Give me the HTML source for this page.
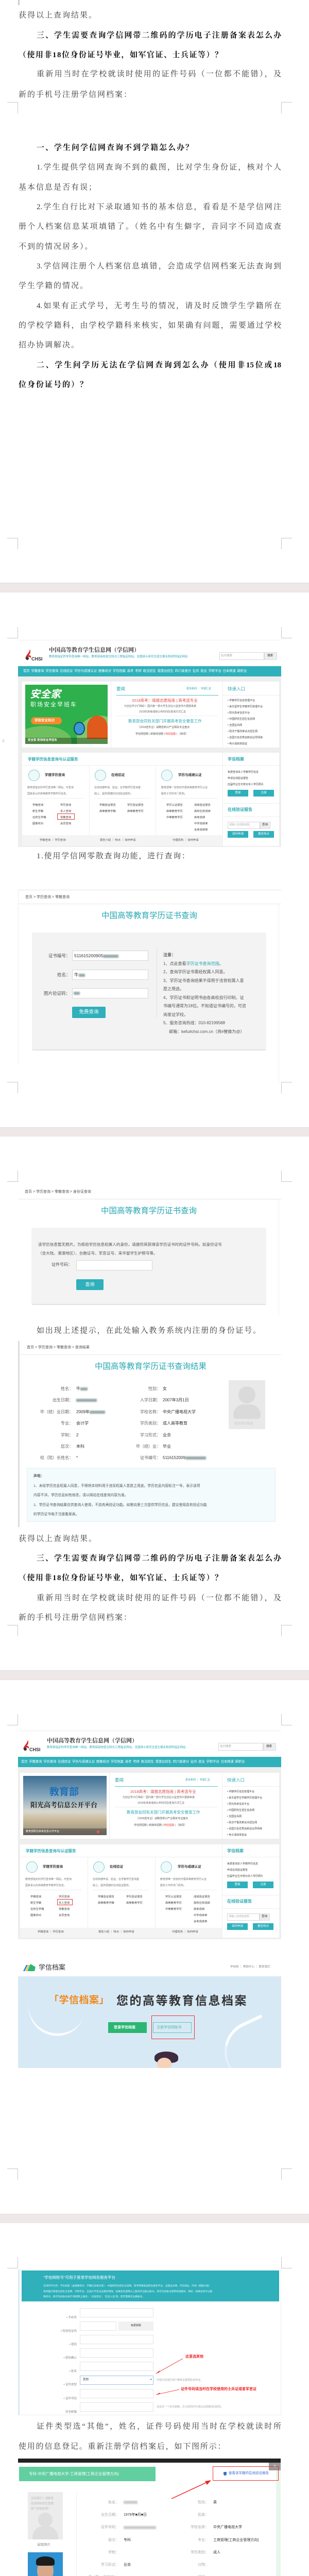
<!DOCTYPE html>
<html><head><meta charset="utf-8">
<style>
*{margin:0;padding:0;box-sizing:border-box}
html{width:600px;height:5150px;overflow:hidden}
body{width:600px;height:5150px;background:#fff;position:relative;overflow:hidden}
.a{position:absolute}
.t{position:absolute;font-family:"Liberation Serif","Noto Serif CJK SC",serif;font-size:15px;line-height:20px;letter-spacing:2px;color:#3c3c3c;white-space:nowrap}
.b{font-weight:bold;color:#111}
.j{text-align:justify;text-align-last:justify;letter-spacing:0;white-space:normal;height:20px;overflow:hidden}
.x{position:absolute;font-family:"Liberation Sans","Noto Sans CJK SC",sans-serif;white-space:nowrap;line-height:1}
.band{position:absolute;left:0;width:600px;background:#eee8e8;border-top:1px solid #e2dcdc;border-bottom:1px solid #e8e4e4}
.cd{position:absolute;width:21px;height:22px;border-color:#c8c8c8;border-style:solid;border-width:0}
.bl{filter:blur(1.2px);background:#9aa;display:inline-block;height:6px;vertical-align:middle}
.tl{color:#2aa8b4}
.btn{position:absolute;background:#2fb0bb;color:#fff;font-family:"Liberation Sans","Noto Sans CJK SC",sans-serif;text-align:center;white-space:nowrap}
.inp{position:absolute;background:#fff;border:1px solid #d6d6d6}
.chsi{position:absolute;left:35px;width:511px;height:401px;background:#fff;border-top:1px solid #eee}
.w{position:absolute;background:#fff}
</style></head><body>

<div class="a" style="left:35px;top:0;width:3px;height:10px;background:#ccc"></div>

<div class="t" style="left:36px;top:20px">获得以上查询结果。</div>
<div class="t b j" style="left:71px;top:59px;width:475px">三、学生需要查询学信网带二维码的学历电子注册备案表怎么办</div>
<div class="t b" style="left:36px;top:97px;letter-spacing:1.5px">（使用非18位身份证号毕业，如军官证、士兵证等）？</div>
<div class="t j" style="left:71px;top:134px;width:475px">重新用当时在学校就读时使用的证件号码（一位都不能错），及</div>
<div class="t" style="left:36px;top:174px">新的手机号注册学信网档案：</div>

<div class="cd" style="left:14px;top:198px;border-top-width:1px;border-right-width:1px"></div>
<div class="cd" style="left:546px;top:198px;border-top-width:1px;border-left-width:1px"></div>

<div class="t b" style="left:71px;top:277px">一、学生问学信网查询不到学籍怎么办？</div>
<div class="t j" style="left:71px;top:315px;width:475px">1.学生提供学信网查询不到的截图，比对学生身份证，核对个人</div>
<div class="t" style="left:36px;top:354px">基本信息是否有误；</div>
<div class="t j" style="left:71px;top:392px;width:475px">2.学生自行比对下录取通知书的基本信息，看看是不是学信网注</div>
<div class="t j" style="left:36px;top:430px;width:510px">册个人档案信息某项填错了。（姓名中有生僻字，音同字不同造成查</div>
<div class="t" style="left:36px;top:469px">不到的情况居多）。</div>
<div class="t j" style="left:71px;top:507px;width:475px">3.学信网注册个人档案信息填错，会造成学信网档案无法查询到</div>
<div class="t" style="left:36px;top:545px">学生学籍的情况。</div>
<div class="t j" style="left:71px;top:584px;width:475px">4.如果有正式学号，无考生号的情况，请及时反馈学生学籍所在</div>
<div class="t j" style="left:36px;top:622px;width:510px">的学校学籍科，由学校学籍科来核实，如果确有问题，需要通过学校</div>
<div class="t" style="left:36px;top:660px">招办协调解决。</div>
<div class="t b j" style="left:71px;top:699px;width:475px">二、学生问学历无法在学信网查询到怎么办（使用非15位或18</div>
<div class="t b" style="left:36px;top:737px">位身份证号的）？</div>

<div class="cd" style="left:14px;top:1044px;border-top-width:1px;border-right-width:1px"></div>
<div class="cd" style="left:546px;top:1044px;border-top-width:1px;border-left-width:1px"></div>
<div class="band" style="top:1131px;height:19px"></div>
<div class="cd" style="left:14px;top:1217px;border-bottom-width:1px;border-right-width:1px"></div>
<div class="cd" style="left:546px;top:1217px;border-bottom-width:1px;border-left-width:1px"></div>
<div class="x" style="left:4px;top:1436px;font-size:7px;color:#999">⠿</div>

<div class="chsi" style="top:1242px">
 <svg class="a" style="left:10px;top:13px" width="44" height="28" viewBox="0 0 44 28"><path d="M4 22 C6 14 12 12 13 4 C15 9 14 13 10 16 C14 15 16 18 15 21 C12 18 8 18 4 22Z" fill="#d9262a"/><circle cx="8" cy="22" r="3" fill="#333"/><text x="16" y="26" font-family="Liberation Sans" font-size="9" font-weight="bold" fill="#333">CHSI</text></svg>
 <div class="x" style="left:60px;top:14px;font-size:11px;font-weight:bold;color:#333;font-family:'Liberation Serif','Noto Serif CJK SC',serif">中国高等教育学生信息网（学信网）</div>
 <div class="x tl" style="left:60px;top:30px;font-size:5.5px">教育部指定的学历查询唯一网站、教育部高校招生阳光工程指定网站、全国硕士研究生招生报名和调剂指定网站</div>
 <div class="inp" style="left:391px;top:23px;width:87px;height:15px"></div>
 <div class="x" style="left:394px;top:28px;font-size:5.5px;color:#aaa">站内搜索</div>
 <div class="a" style="left:478px;top:23px;width:25px;height:15px;background:#eee;border:1px solid #ddd"></div>
 <div class="x" style="left:484px;top:28px;font-size:5.5px;color:#333">搜索</div>
 <div class="a" style="left:0;top:50px;width:511px;height:20px;background:#2fb1bb"></div>
 <div class="x" style="left:10px;top:57px;font-size:6.3px;color:#fff;word-spacing:1px">首页 学籍查询 学历查询 在线验证 学历与成绩认证 图像校对 学信档案 高考 考研 政法招生 港澳台招生 四六级查分 征兵 就业 学职平台 日本频道 新职业</div>
 <div class="a" style="left:0;top:70px;width:511px;height:331px;background:#eeeeee"></div>
 <div class="w" style="left:8px;top:80px;width:172px;height:128px"></div>
 <div class="a" style="left:14px;top:86px;width:160px;height:115px;background:#2eb04c;overflow:hidden">
  <div class="a" style="left:100px;top:60px;width:90px;height:90px;border-radius:50%;background:#7ec86b"></div>
  <div class="a" style="left:-20px;top:80px;width:110px;height:60px;border-radius:50%;background:#6fbf5e"></div>
  <div class="x" style="left:9px;top:9px;font-size:20px;font-weight:bold;font-style:italic;color:#fff">安全家</div>
  <div class="x" style="left:10px;top:34px;font-size:11px;color:#fff;letter-spacing:2px">职场安全早班车</div>
  <div class="a" style="left:11px;top:63px;width:60px;height:14px;border-radius:7px;background:#f68a2a"></div>
  <div class="x" style="left:18px;top:67px;font-size:6.5px;color:#fff;font-weight:bold">获取安全知识</div>
  <div class="a" style="left:120px;top:60px;width:40px;height:45px;border-radius:50% 50% 0 0;background:#e05a1c"></div>
  <div class="a" style="left:94px;top:72px;width:22px;height:26px;border-radius:50%;background:#3a9ad8;border:2px solid #246"></div>
  <div class="a" style="left:0;top:103px;width:160px;height:12px;background:rgba(0,0,0,.3)"></div>
  <div class="x" style="left:5px;top:106px;font-size:5.5px;color:#fff;font-weight:bold">安全家·职场安全早班车</div>
 </div>
 <div class="w" style="left:181px;top:80px;width:216px;height:128px"></div>
 <div class="x tl" style="left:191px;top:90px;font-size:8.5px">要闻</div>
 <div class="x tl" style="left:327px;top:92px;font-size:5px">更多新闻 ｜ 专题汇总</div>
 <div class="a" style="left:191px;top:106px;width:198px;height:1px;background:#5bc0c8"></div>
 <div class="x" style="left:221px;top:113px;font-size:7.5px;color:#e24b4b">2018高考：填报志愿指南 | 高考选专业</div>
 <div class="x" style="left:206px;top:126px;font-size:5px;color:#666">为创业学子们喝彩！国内第一部大学生创业公益宣传片震撼来袭</div>
 <div class="x" style="left:235px;top:137px;font-size:5px;color:#666">2018年高考成绩公布时间及查询方式汇总</div>
 <div class="a" style="left:191px;top:146px;width:198px;height:1px;background:#eee"></div>
 <div class="x tl" style="left:214px;top:153px;font-size:7.5px">教育部会同有关部门开展高考安全督查工作</div>
 <div class="x" style="left:232px;top:167px;font-size:5px;color:#555">［2018选专业］战略性新兴产业相关专业盘点</div>
 <div class="x" style="left:228px;top:180px;font-size:5px;color:#555">学信网招聘 | 新媒体招聘 | <span style="color:#e44">特别提醒</span> | ［新闻］</div>
 <div class="w" style="left:398px;top:80px;width:109px;height:128px"></div>
 <div class="x tl" style="left:407px;top:90px;font-size:8.5px">快速入口</div>
 <div class="a" style="left:398px;top:106px;width:109px;height:1px;background:#eee"></div>
 <div class="x" style="left:407px;top:111px;font-size:5px;color:#444;line-height:12px">• 学籍学历信息管理平台<br>• 来华留学生学籍学历管理平台<br>• 阳光高考信息平台<br>• 中国研究生招生信息网<br>• 全国征兵网<br>• 政法干警改革试点招生网<br>• 全国万名优秀创新创业导师库<br>• 电子成绩单验证</div>
 <div class="w" style="left:8px;top:218px;width:389px;height:181px"></div>
 <div class="x tl" style="left:19px;top:227px;font-size:7.5px;font-weight:bold">学籍学历信息查询与认证服务</div>
 <div class="a" style="left:8px;top:242px;width:389px;height:1px;background:#eee"></div>
 <div class="a" style="left:138px;top:242px;width:1px;height:157px;background:#eee"></div>
 <div class="a" style="left:267px;top:242px;width:1px;height:157px;background:#eee"></div>
 <div class="a" style="left:8px;top:378px;width:389px;height:21px;background:#f4f4f4"></div>
 <div class="a" style="left:20px;top:251px;width:22px;height:22px;border-radius:50%;border:1px solid #7fcbd2;background:#eef9fa"></div>
 <div class="a" style="left:149px;top:251px;width:22px;height:22px;border-radius:50%;border:1px solid #7fcbd2;background:#eef9fa"></div>
 <div class="a" style="left:278px;top:251px;width:22px;height:22px;border-radius:50%;border:1px solid #7fcbd2;background:#eef9fa"></div>
 <div class="x" style="left:52px;top:259px;font-size:6.5px;font-weight:bold;color:#333">学籍学历查询</div>
 <div class="x" style="left:181px;top:259px;font-size:6.5px;font-weight:bold;color:#333">在线验证</div>
 <div class="x" style="left:311px;top:259px;font-size:6.5px;font-weight:bold;color:#333">学历与成绩认证</div>
 <div class="x" style="left:18px;top:280px;font-size:5px;color:#777;line-height:12px">教育部指定的学历查询唯一网站，可查询<br>国家承认的高等教育学籍学历信息。</div>
 <div class="x" style="left:148px;top:280px;font-size:5px;color:#777;line-height:12px">在线快捷申请、验证。在学籍学历查询基<br>础上，提供便捷的在线验证服务。</div>
 <div class="x" style="left:278px;top:280px;font-size:5px;color:#777;line-height:12px">教育部唯一授权的开展高等教育学历认证<br>服务工作的专门机构。</div>
 <div class="a" style="left:18px;top:306px;width:110px;height:1px;background:#eee"></div>
 <div class="a" style="left:148px;top:306px;width:110px;height:1px;background:#eee"></div>
 <div class="a" style="left:278px;top:306px;width:110px;height:1px;background:#eee"></div>
 <div class="x" style="left:28px;top:314px;font-size:5.3px;color:#444;line-height:12px">学籍查询<br>新生学籍<br>在校生学籍<br>图像校对</div>
 <div class="x" style="left:82px;top:314px;font-size:5.3px;color:#444;line-height:12px">学历查询<br>本人查询<br>零散查询<br>会员查询</div>
 <div class="a" style="left:76px;top:336px;width:34px;height:12px;border:1px solid #e33"></div>
 <div class="x" style="left:158px;top:314px;font-size:5.3px;color:#444;line-height:12px">学籍验证报告<br>高等教育学籍</div>
 <div class="x" style="left:212px;top:314px;font-size:5.3px;color:#444;line-height:12px">学历验证报告<br>高等教育学历</div>
 <div class="x" style="left:288px;top:314px;font-size:5.3px;color:#444;line-height:12px">学历认证报告<br>高等教育学历<br>中等教育学历</div>
 <div class="x" style="left:342px;top:314px;font-size:5.3px;color:#444;line-height:12px">成绩验证报告<br>高校在校成绩<br>高考成绩<br>中学成绩单<br>会考成绩单</div>
 <div class="x" style="left:42px;top:386px;font-size:5.3px;color:#555">学籍查询 ｜ 学历查询</div>
 <div class="x" style="left:159px;top:386px;font-size:5.3px;color:#555">报告介绍 ｜ 特点 ｜ 如何申请</div>
 <div class="x" style="left:300px;top:386px;font-size:5.3px;color:#555">代理机构 ｜ 如何申请</div>
 <div class="w" style="left:398px;top:218px;width:109px;height:181px"></div>
 <div class="x tl" style="left:407px;top:227px;font-size:8px;font-weight:bold">学信档案</div>
 <div class="a" style="left:398px;top:242px;width:109px;height:1px;background:#eee"></div>
 <div class="x" style="left:407px;top:250px;font-size:5px;color:#444;line-height:12px">免费查询本人学籍学历信息<br>申请在线验证报告<br>应届毕业生可校对本人学历照片</div>
 <div class="btn" style="left:407px;top:290px;width:40px;height:13px;font-size:5.5px;line-height:13px">登录</div>
 <div class="btn" style="left:457px;top:290px;width:40px;height:13px;font-size:5.5px;line-height:13px">注册</div>
 <div class="a" style="left:398px;top:316px;width:109px;height:1px;background:#eee"></div>
 <div class="x tl" style="left:407px;top:325px;font-size:8px;font-weight:bold">在线验证报告</div>
 <div class="a" style="left:398px;top:342px;width:109px;height:1px;background:#eee"></div>
 <div class="inp" style="left:407px;top:352px;width:63px;height:14px"></div>
 <div class="x" style="left:410px;top:356px;font-size:5px;color:#aaa">请输入在线验证码</div>
 <div class="a" style="left:470px;top:352px;width:20px;height:14px;background:#eee;border:1px solid #ddd"></div>
 <div class="x" style="left:474px;top:356px;font-size:5.5px;color:#333">查询</div>
 <div class="btn" style="left:407px;top:370px;width:40px;height:13px;font-size:5.5px;line-height:13px">如何申请</div>
 <div class="btn" style="left:457px;top:370px;width:40px;height:13px;font-size:5.5px;line-height:13px">报告特点</div>
</div>

<div class="t" style="left:71px;top:1652px;letter-spacing:1.7px">1.使用学信网零散查询功能，进行查询：</div>

<div class="a" style="left:35px;top:1727px;width:511px;height:340px;border-top:1px solid #e4e4e4;border-left:1px solid #eee"></div>
<div class="a" style="left:541px;top:1754px;width:1px;height:350px;background:#eee"></div>
<div class="x" style="left:49px;top:1738px;font-size:7px;color:#555">首页 &gt; 学历查询 &gt; 零散查询</div>
<div class="a" style="left:35px;top:1754px;width:511px;height:1px;background:#e8e8e8"></div>
<div class="x tl" style="left:197px;top:1770px;font-size:15.5px">中国高等教育学历证书查询</div>
<div class="a" style="left:62px;top:1810px;width:455px;height:229px;background:#f3f3f3;border-bottom:2px solid #e2e2e2;border-radius:3px"></div>
<div class="x" style="left:94px;top:1851px;font-size:8.5px;color:#555">证书编号：</div>
<div class="x" style="left:111px;top:1888px;font-size:8.5px;color:#555">姓名：</div>
<div class="x" style="left:85px;top:1924px;font-size:8.5px;color:#555">图片验证码：</div>
<div class="inp" style="left:140px;top:1845px;width:148px;height:20px"></div>
<div class="inp" style="left:140px;top:1882px;width:148px;height:20px"></div>
<div class="inp" style="left:140px;top:1918px;width:148px;height:20px"></div>
<div class="x" style="left:144px;top:1851px;font-size:8.5px;color:#333">511615200905<span class="bl" style="width:30px"></span></div>
<div class="x" style="left:144px;top:1888px;font-size:8.5px;color:#333">牛<span class="bl" style="width:12px"></span></div>
<div class="x" style="left:143px;top:1924px;font-size:8px"><span class="bl" style="width:12px"></span></div>
<div class="btn" style="left:140px;top:1954px;width:65px;height:22px;font-size:9.5px;line-height:22px;border-radius:2px">免费查询</div>
<div class="a" style="left:304px;top:1840px;width:1px;height:135px;background:#e0e0e0"></div>
<div class="x" style="left:317px;top:1846px;font-size:8px;color:#555;line-height:16.5px">
<b>注意：</b><br>1、点此查看<span class="tl">学历证书查询范围</span>。<br>2、查询学历证书需经权属人同意。<br>3、学历证书查询结果不得用于违背权属人意<br>愿之用途。<br>4、学历证书和证明书由各高校自行印制，证<br>书编号通常为18位。不知道证书编号的，可咨<br>询发证学校。<br>5、服务咨询热线：010-82199588<br>&nbsp;&nbsp;&nbsp;&nbsp;&nbsp;邮箱：kefu#chsi.com.cn（将#替换为@）</div>

<div class="cd" style="left:14px;top:2100px;border-top-width:1px;border-right-width:1px"></div>
<div class="cd" style="left:546px;top:2100px;border-top-width:1px;border-left-width:1px"></div>
<div class="band" style="top:2188px;height:18px"></div>
<div class="cd" style="left:14px;top:2272px;border-bottom-width:1px;border-right-width:1px"></div>
<div class="cd" style="left:546px;top:2272px;border-bottom-width:1px;border-left-width:1px"></div>

<div class="x" style="left:48px;top:2310px;font-size:7px;color:#555">首页 &gt; 学历查询 &gt; 零散查询 &gt; 身份证查询</div>
<div class="a" style="left:35px;top:2327px;width:511px;height:1px;background:#e8e8e8"></div>
<div class="a" style="left:541px;top:2327px;width:1px;height:226px;background:#eee"></div>
<div class="x tl" style="left:196px;top:2343px;font-size:15.5px">中国高等教育学历证书查询</div>
<div class="a" style="left:61px;top:2383px;width:456px;height:150px;background:#f3f3f3;border-bottom:2px solid #e2e2e2;border-radius:3px"></div>
<div class="x" style="left:74px;top:2407px;font-size:7.6px;color:#555;line-height:17px">该学历信息暂无照片。为核验学历信息权属人的身份，请提供其获得该学历证书时的证件号码。如身份证号<br>（含大陆、港澳地区）、台胞证号、军官证号、来华留学生护照号等。</div>
<div class="x" style="left:100px;top:2451px;font-size:8px;color:#555">证件号码：</div>
<div class="inp" style="left:148px;top:2446px;width:148px;height:20px"></div>
<div class="btn" style="left:148px;top:2483px;width:53px;height:21px;font-size:9px;line-height:21px;border-radius:2px">查询</div>

<div class="t" style="left:71px;top:2573px;letter-spacing:1.8px">如出现上述提示，在此处输入教务系统内注册的身份证号。</div>

<div class="a" style="left:35px;top:2603px;width:3px;height:361px;background:#ddd"></div>
<div class="x" style="left:52px;top:2612px;font-size:7px;color:#555">首页 &gt; 学历查询 &gt; 零散查询 &gt; 查询结果</div>
<div class="a" style="left:38px;top:2629px;width:508px;height:1px;background:#e8e8e8"></div>
<div class="x tl" style="left:184px;top:2645px;font-size:15.5px">中国高等教育学历证书查询结果</div>
<div class="x" style="left:40px;top:2685px;width:102px;text-align:right;font-size:8px;color:#666;line-height:22.4px">姓名：<br>出生日期：<br>毕（结）业日期：<br>专业：<br>学制：<br>层次：<br>校（院）长姓名：</div>
<div class="x" style="left:148px;top:2685px;font-size:8px;color:#333;line-height:22.4px">牛<span class="bl" style="width:14px"></span><br><span class="bl" style="width:40px"></span><br>2009年<span class="bl" style="width:30px"></span><br>会计学<br>2<br>本科<br>*</div>
<div class="x" style="left:232px;top:2685px;width:80px;text-align:right;font-size:8px;color:#666;line-height:22.4px">性别：<br>入学日期：<br>学校名称：<br>学历类别：<br>学习形式：<br>毕（结）业：<br>证书编号：</div>
<div class="x" style="left:316px;top:2685px;font-size:8px;color:#333;line-height:22.4px">女<br>2007年3月1日<br>中央广播电视大学<br>成人高等教育<br>业余<br>毕业<br>5116152009<span class="bl" style="width:40px"></span></div>
<div class="a" style="left:444px;top:2679px;width:71px;height:95px;background:#e9e9e9;overflow:hidden">
 <div class="a" style="left:19px;top:12px;width:33px;height:33px;border-radius:50%;background:#dadada"></div>
 <div class="a" style="left:9px;top:47px;width:53px;height:28px;border-radius:20px 20px 6px 6px;background:#dadada"></div>
 <div class="x" style="left:11px;top:82px;font-size:6px;color:#ccc">暂无照片数据</div>
</div>
<div class="a" style="left:52px;top:2849px;width:483px;height:105px;background:#f4fbfd;border:1px solid #e3eef2"></div>
<div class="x" style="left:65px;top:2857px;font-size:6.8px;color:#555;line-height:18.5px"><b>声明：</b><br>1、未经学历信息权属人同意，不得将本材料用于违背权属人意愿之用途。学历信息内容标注“*”号，表示该项<br>内容不详。学历信息如有修改，请以网站在线查询内容为准。<br>2、学历证书查询结果仅供查询人使用，不具有再验证功能。如需向第三方提供学历信息，建议使用具有验证功能<br>的学历证书电子注册备案表。</div>

<div class="t" style="left:36px;top:2977px">获得以上查询结果。</div>
<div class="t b j" style="left:71px;top:3015px;width:475px">三、学生需要查询学信网带二维码的学历电子注册备案表怎么办</div>
<div class="t b" style="left:36px;top:3053px;letter-spacing:1.5px">（使用非18位身份证号毕业，如军官证、士兵证等）？</div>
<div class="t j" style="left:71px;top:3092px;width:475px">重新用当时在学校就读时使用的证件号码（一位都不能错），及</div>
<div class="t" style="left:36px;top:3130px">新的手机号注册学信网档案：</div>

<div class="cd" style="left:14px;top:3154px;border-top-width:1px;border-right-width:1px"></div>
<div class="cd" style="left:546px;top:3154px;border-top-width:1px;border-left-width:1px"></div>
<div class="band" style="top:3242px;height:19px"></div>
<div class="cd" style="left:14px;top:3327px;border-bottom-width:1px;border-right-width:1px"></div>
<div class="cd" style="left:546px;top:3327px;border-bottom-width:1px;border-left-width:1px"></div>

<div class="chsi" style="top:3359px">
 <svg class="a" style="left:6px;top:13px" width="44" height="28" viewBox="0 0 44 28"><path d="M4 22 C6 14 12 12 13 4 C15 9 14 13 10 16 C14 15 16 18 15 21 C12 18 8 18 4 22Z" fill="#d9262a"/><circle cx="8" cy="22" r="3" fill="#333"/><text x="16" y="26" font-family="Liberation Sans" font-size="9" font-weight="bold" fill="#333">CHSI</text></svg>
 <div class="x" style="left:56px;top:14px;font-size:11px;font-weight:bold;color:#333;font-family:'Liberation Serif','Noto Serif CJK SC',serif">中国高等教育学生信息网（学信网）</div>
 <div class="x tl" style="left:56px;top:30px;font-size:5.5px">教育部指定的学历查询唯一网站、教育部高校招生阳光工程指定网站、全国硕士研究生招生报名和调剂指定网站</div>
 <div class="inp" style="left:389px;top:23px;width:87px;height:15px"></div>
 <div class="x" style="left:392px;top:28px;font-size:5.5px;color:#aaa">站内搜索</div>
 <div class="a" style="left:476px;top:23px;width:25px;height:15px;background:#eee;border:1px solid #ddd"></div>
 <div class="x" style="left:482px;top:28px;font-size:5.5px;color:#333">搜索</div>
 <div class="a" style="left:0;top:50px;width:511px;height:20px;background:#2fb1bb"></div>
 <div class="x" style="left:6px;top:57px;font-size:6.3px;color:#fff;word-spacing:1px">首页 学籍查询 学历查询 在线验证 学历与成绩认证 图像校对 学信档案 高考 考研 政法招生 港澳台招生 四六级查分 征兵 就业 学职平台 日本频道 新职业</div>
 <div class="a" style="left:0;top:70px;width:511px;height:334px;background:#eeeeee"></div>
 <div class="w" style="left:4px;top:81px;width:173px;height:128px"></div>
 <div class="a" style="left:10px;top:87px;width:162px;height:115px;overflow:hidden;background:linear-gradient(180deg,#3d6f93 0%,#8aa9bd 35%,#d9d8cf 60%,#c9b896 75%,#8e8a80 100%)">
  <div class="x" style="left:51px;top:22px;font-size:19px;font-weight:bold;color:#1d6fb8">教育部</div>
  <div class="x" style="left:14px;top:50px;font-size:13px;font-weight:bold;color:#222;font-family:'Liberation Serif','Noto Serif CJK SC',serif">阳光高考信息公开平台</div>
  <div class="a" style="left:0;top:102px;width:162px;height:13px;background:rgba(0,0,0,.3)"></div>
  <div class="x" style="left:5px;top:106px;font-size:5px;color:#fff">教育部阳光高考信息公开平台</div>
  <div class="a" style="left:143px;top:106px;width:5px;height:5px;border-radius:50%;background:#f55"></div>
 </div>
 <div class="w" style="left:178px;top:81px;width:218px;height:128px"></div>
 <div class="x tl" style="left:188px;top:91px;font-size:8.5px">要闻</div>
 <div class="x tl" style="left:325px;top:93px;font-size:5px">更多新闻 ｜ 专题汇总</div>
 <div class="a" style="left:188px;top:107px;width:200px;height:1px;background:#5bc0c8"></div>
 <div class="x" style="left:218px;top:114px;font-size:7.5px;color:#e24b4b">2018高考：填报志愿指南 | 高考选专业</div>
 <div class="x" style="left:203px;top:127px;font-size:5px;color:#666">为创业学子们喝彩！国内第一部大学生创业公益宣传片震撼来袭</div>
 <div class="x" style="left:232px;top:138px;font-size:5px;color:#666">2018年高考成绩公布时间及查询方式汇总</div>
 <div class="a" style="left:188px;top:147px;width:200px;height:1px;background:#eee"></div>
 <div class="x tl" style="left:211px;top:154px;font-size:7.5px">教育部会同有关部门开展高考安全督查工作</div>
 <div class="x" style="left:229px;top:168px;font-size:5px;color:#555">［2018选专业］战略性新兴产业相关专业盘点</div>
 <div class="x" style="left:225px;top:181px;font-size:5px;color:#555">学信网招聘 | 新媒体招聘 | <span style="color:#e44">特别提醒</span> | ［新闻］</div>
 <div class="w" style="left:397px;top:81px;width:110px;height:128px"></div>
 <div class="x tl" style="left:406px;top:91px;font-size:8.5px">快速入口</div>
 <div class="a" style="left:397px;top:107px;width:110px;height:1px;background:#eee"></div>
 <div class="x" style="left:406px;top:112px;font-size:5px;color:#444;line-height:12px">• 学籍学历信息管理平台<br>• 来华留学生学籍学历管理平台<br>• 阳光高考信息平台<br>• 中国研究生招生信息网<br>• 全国征兵网<br>• 政法干警改革试点招生网<br>• 全国万名优秀创新创业导师库<br>• 电子成绩单验证</div>
 <div class="w" style="left:4px;top:220px;width:392px;height:181px"></div>
 <div class="x tl" style="left:15px;top:229px;font-size:7.5px;font-weight:bold">学籍学历信息查询与认证服务</div>
 <div class="a" style="left:4px;top:244px;width:392px;height:1px;background:#eee"></div>
 <div class="a" style="left:135px;top:244px;width:1px;height:157px;background:#eee"></div>
 <div class="a" style="left:266px;top:244px;width:1px;height:157px;background:#eee"></div>
 <div class="a" style="left:4px;top:382px;width:392px;height:19px;background:#f4f4f4"></div>
 <div class="a" style="left:16px;top:253px;width:22px;height:22px;border-radius:50%;border:1px solid #7fcbd2;background:#eef9fa"></div>
 <div class="a" style="left:146px;top:253px;width:22px;height:22px;border-radius:50%;border:1px solid #7fcbd2;background:#eef9fa"></div>
 <div class="a" style="left:277px;top:253px;width:22px;height:22px;border-radius:50%;border:1px solid #7fcbd2;background:#eef9fa"></div>
 <div class="x" style="left:48px;top:261px;font-size:6.5px;font-weight:bold;color:#333">学籍学历查询</div>
 <div class="x" style="left:178px;top:261px;font-size:6.5px;font-weight:bold;color:#333">在线验证</div>
 <div class="x" style="left:310px;top:261px;font-size:6.5px;font-weight:bold;color:#333">学历与成绩认证</div>
 <div class="x" style="left:14px;top:282px;font-size:5px;color:#777;line-height:12px">教育部指定的学历查询唯一网站，可查询<br>国家承认的高等教育学籍学历信息。</div>
 <div class="x" style="left:145px;top:282px;font-size:5px;color:#777;line-height:12px">在线快捷申请、验证。在学籍学历查询基<br>础上，提供便捷的在线验证服务。</div>
 <div class="x" style="left:276px;top:282px;font-size:5px;color:#777;line-height:12px">教育部唯一授权的开展高等教育学历认证<br>服务工作的专门机构。</div>
 <div class="a" style="left:14px;top:308px;width:110px;height:1px;background:#eee"></div>
 <div class="a" style="left:145px;top:308px;width:110px;height:1px;background:#eee"></div>
 <div class="a" style="left:276px;top:308px;width:110px;height:1px;background:#eee"></div>
 <div class="x" style="left:24px;top:316px;font-size:5.3px;color:#444;line-height:12px">学籍查询<br>新生学籍<br>在校生学籍<br>图像校对</div>
 <div class="x" style="left:79px;top:316px;font-size:5.3px;color:#444;line-height:12px">学历查询<br>本人查询<br>零散查询<br>会员查询</div>
 <div class="a" style="left:76px;top:326px;width:30px;height:12px;border:1px solid #e33"></div>
 <div class="x" style="left:155px;top:316px;font-size:5.3px;color:#444;line-height:12px">学籍验证报告<br>高等教育学籍</div>
 <div class="x" style="left:210px;top:316px;font-size:5.3px;color:#444;line-height:12px">学历验证报告<br>高等教育学历</div>
 <div class="x" style="left:286px;top:316px;font-size:5.3px;color:#444;line-height:12px">学历认证报告<br>高等教育学历<br>中等教育学历</div>
 <div class="x" style="left:341px;top:316px;font-size:5.3px;color:#444;line-height:12px">成绩验证报告<br>高校在校成绩<br>高考成绩<br>中学成绩单<br>会考成绩单</div>
 <div class="x" style="left:38px;top:388px;font-size:5.3px;color:#555">学籍查询 ｜ 学历查询</div>
 <div class="x" style="left:156px;top:388px;font-size:5.3px;color:#555">报告介绍 ｜ 特点 ｜ 如何申请</div>
 <div class="x" style="left:299px;top:388px;font-size:5.3px;color:#555">代理机构 ｜ 如何申请</div>
 <div class="w" style="left:397px;top:220px;width:110px;height:181px"></div>
 <div class="x tl" style="left:406px;top:229px;font-size:8px;font-weight:bold">学信档案</div>
 <div class="a" style="left:397px;top:244px;width:110px;height:1px;background:#eee"></div>
 <div class="x" style="left:406px;top:252px;font-size:5px;color:#444;line-height:12px">免费查询本人学籍学历信息<br>申请在线验证报告<br>应届毕业生可校对本人学历照片</div>
 <div class="btn" style="left:406px;top:292px;width:40px;height:13px;font-size:5.5px;line-height:13px">登录</div>
 <div class="btn" style="left:456px;top:292px;width:40px;height:13px;font-size:5.5px;line-height:13px">注册</div>
 <div class="a" style="left:397px;top:318px;width:110px;height:1px;background:#eee"></div>
 <div class="x tl" style="left:406px;top:327px;font-size:8px;font-weight:bold">在线验证报告</div>
 <div class="a" style="left:397px;top:344px;width:110px;height:1px;background:#eee"></div>
 <div class="inp" style="left:406px;top:354px;width:63px;height:14px"></div>
 <div class="x" style="left:409px;top:358px;font-size:5px;color:#aaa">请输入在线验证码</div>
 <div class="a" style="left:469px;top:354px;width:20px;height:14px;background:#eee;border:1px solid #ddd"></div>
 <div class="x" style="left:473px;top:358px;font-size:5.5px;color:#333">查询</div>
 <div class="btn" style="left:406px;top:373px;width:40px;height:13px;font-size:5.5px;line-height:13px">如何申请</div>
 <div class="btn" style="left:456px;top:373px;width:40px;height:13px;font-size:5.5px;line-height:13px">报告特点</div>
</div>

<svg class="a" style="left:43px;top:3810px" width="28" height="18" viewBox="0 0 28 18"><path d="M2 16 L8 4 L11 4 L5 16Z" fill="#2f7fd6"/><path d="M6 16 L12 4 L15 4 L9 16Z" fill="#f2c531"/><path d="M10 16 L16 2 L26 8 L24 16Z" fill="#2bb673"/></svg>
<div class="x" style="left:75px;top:3812px;font-size:13px;color:#333">学信档案</div>
<div class="x" style="left:447px;top:3816px;font-size:5.5px;color:#888">学信网 ｜ 帮助中心 ｜ 联系我们</div>
<div class="a" style="left:35px;top:3836px;width:511px;height:178px;background:#d8e9f6;overflow:hidden">
 <div class="a" style="left:15px;top:60px;width:110px;height:55px;border-radius:0 0 60px 60px;border-bottom:5px solid #fff;transform:rotate(12deg);opacity:.9"></div>
 <div class="a" style="left:400px;top:90px;width:100px;height:110px;border-radius:60px 0 0 0;border-top:6px solid #fff;border-left:3px solid #e8f2fb;transform:rotate(-25deg)"></div>
 <div class="x" style="left:60px;top:37px;font-size:19px;font-weight:bold;color:#f08a1c;letter-spacing:0.5px">「学信档案」</div>
 <div class="x" style="left:191px;top:36px;font-size:23px;font-weight:bold;color:#333;letter-spacing:2.5px">您的高等教育信息档案</div>
 <div class="a" style="left:175px;top:89px;width:75px;height:21px;background:#2bb673"></div>
 <div class="x" style="left:186px;top:96px;font-size:7px;color:#fff;font-weight:bold">登录学信档案</div>
 <div class="a" style="left:262px;top:89px;width:75px;height:21px;border:1px solid #5ccab0"></div>
 <div class="x" style="left:269px;top:96px;font-size:7px;color:#4cc0a8">注册学信网账号</div>
 <div class="a" style="left:259px;top:76px;width:84px;height:46px;border:1px solid #e33"></div>
 <div class="a" style="left:265px;top:146px;width:46px;height:22px;border-radius:50% 50% 30% 30%;background:#3f2b40"></div>
 <div class="a" style="left:270px;top:158px;width:28px;height:24px;border-radius:50%;background:#f6d2b8"></div>
</div>

<div class="cd" style="left:14px;top:4209px;border-top-width:1px;border-right-width:1px"></div>
<div class="cd" style="left:546px;top:4209px;border-top-width:1px;border-left-width:1px"></div>
<div class="band" style="top:4297px;height:18px"></div>
<div class="cd" style="left:14px;top:4381px;border-bottom-width:1px;border-right-width:1px"></div>
<div class="cd" style="left:546px;top:4381px;border-bottom-width:1px;border-left-width:1px"></div>

<div class="a" style="left:35px;top:4405px;width:511px;height:283px;border:1px solid #eee;border-left:3px solid #dbe9f2"></div>
<div class="a" style="left:42px;top:4407px;width:500px;height:60px;background:#2fb0bb"></div>
<div class="x" style="left:84px;top:4417px;font-size:7.5px;color:#fff">“学信网账号”可用于登录学信网各服务平台</div>
<div class="x" style="left:84px;top:4432px;font-size:4.7px;color:#e6f7f8;line-height:10.5px">支持的平台有：学信档案（含图像校对、学籍信息核对等）、中国研究生招生信息网、高考特殊类型招生报名平台、全国征兵网、学信就业、内地（祖国大陆）<br>高校面向港澳台招生信息网、学职平台、全国大学生创业服务网等。如果您在使用以上服务时注册过账号，则可凭此账号使用其他服务，例如：如果您进行过图<br>像校对，则可凭此账号进行“研招网上报名”、“兵役登记”、“应征入伍”等，而无需再次注册账号。</div>
<div class="x" style="left:60px;top:4486px;width:89px;text-align:right;font-size:5.5px;color:#888;line-height:26.1px"><span style="color:#e33">•</span> 手机号<br><span style="color:#e33">•</span> 短信验证码<br><span style="color:#e33">•</span> 密码<br><span style="color:#e33">•</span> 密码确认<br><span style="color:#e33">•</span> 姓名<br><span style="color:#e33">•</span> 证件类型<br><span style="color:#e33">•</span> 证件号码<br>安全邮箱</div>
<div class="inp" style="left:155px;top:4480px;width:143px;height:18px;border-color:#e4e4e4"></div>
<div class="inp" style="left:155px;top:4506px;width:71px;height:18px;border-color:#e4e4e4"></div>
<div class="a" style="left:230px;top:4506px;width:68px;height:18px;background:#f1f1f1"></div>
<div class="x" style="left:254px;top:4512px;font-size:5px;color:#333">免费获取</div>
<div class="inp" style="left:155px;top:4532px;width:143px;height:18px;border-color:#e4e4e4"></div>
<div class="inp" style="left:155px;top:4558px;width:143px;height:18px;border-color:#e4e4e4"></div>
<div class="inp" style="left:155px;top:4584px;width:143px;height:18px;border-color:#e4e4e4"></div>
<div class="inp" style="left:155px;top:4611px;width:143px;height:18px;border-color:#9ec4ee"></div>
<div class="x" style="left:161px;top:4617px;font-size:5.5px;color:#333">其他</div>
<div class="x" style="left:292px;top:4617px;font-size:5px;color:#333">▾</div>
<div class="inp" style="left:155px;top:4637px;width:143px;height:18px;border-color:#e4e4e4"></div>
<div class="inp" style="left:155px;top:4663px;width:143px;height:18px;border-color:#e4e4e4"></div>
<div class="x" style="left:304px;top:4618px;font-size:5px;color:#aaa">中国大陆地区用户推荐设置居民身份证。</div>
<div class="x" style="left:304px;top:4670px;font-size:5px;color:#aaa">请设定一个安全邮箱，忘记密码时可通过此邮箱找回密码。</div>
<div class="x" style="left:360px;top:4571px;font-size:7px;font-weight:bold;color:#e22">这里选其他</div>
<div class="x" style="left:351px;top:4634px;font-size:7px;font-weight:bold;color:#e22">证件号码填当时在学校使用的士兵证或者军官证</div>
<svg class="a" style="left:295px;top:4570px" width="70" height="85"><path d="M60 8 L8 37" stroke="#e22" stroke-width="0.8"/><path d="M8 37 L15 31 L14 35Z" fill="#e22"/><path d="M53 68 L8 78" stroke="#e22" stroke-width="0.8"/><path d="M8 78 L16 74 L15 77Z" fill="#e22"/></svg>

<div class="t j" style="left:71px;top:4700px;width:475px">证件类型选“其他”，姓名，证件号码使用当时在学校就读时所</div>
<div class="t" style="left:36px;top:4739px;letter-spacing:1.8px">使用的信息登记。重新注册学信档案后，如下图所示：</div>

<div class="a" style="left:35px;top:4772px;width:510px;height:320px;background:#222"></div>
<div class="a" style="left:35px;top:4780px;width:510px;height:303px;background:#fff"></div>
<div class="a" style="left:536px;top:4795px;width:9px;height:288px;background:#e8f6ee"></div>
<div class="a" style="left:522px;top:4780px;width:23px;height:15px;background:#999;color:#fff;font:10px/15px 'Liberation Sans';text-align:center">×</div>
<div class="a" style="left:37px;top:4788px;width:265px;height:28px;background:#62cfa0"></div>
<div class="x" style="left:56px;top:4798px;font-size:7.5px;color:#fff">专科-中央广播电视大学-工商管理(工商企业管理方向)</div>
<div class="a" style="left:413px;top:4787px;width:128px;height:28px;border:1.5px solid #e33"></div>
<div class="a" style="left:434px;top:4798px;width:6px;height:7px;background:#3a6fd8;border-radius:1px 1px 3px 3px"></div>
<div class="x" style="left:444px;top:4798px;font-size:6.5px;color:#3a6fd8">查看该学籍的在线验证报告</div>
<svg class="a" style="left:330px;top:4808px" width="84" height="46"><path d="M3 42 L76 8" stroke="#e22" stroke-width="1.5"/><path d="M80 6 L68 8 L72 15Z" fill="#e22"/></svg>
<div class="a" style="left:54px;top:4837px;width:68px;height:92px;background:#ececec;overflow:hidden">
 <div class="x" style="left:6px;top:8px;font-size:5.5px;color:#bbb;line-height:10px">没有照片？请联系<br>就读院校招生管理<br>部门协助处理！</div>
 <div class="a" style="left:20px;top:40px;width:28px;height:28px;border-radius:50%;background:#dedede"></div>
 <div class="a" style="left:9px;top:66px;width:50px;height:30px;border-radius:22px 22px 0 0;background:#dedede"></div>
</div>
<div class="x" style="left:72px;top:4937px;font-size:6.5px;color:#888">采取照片</div>
<div class="a" style="left:54px;top:4954px;width:68px;height:93px;background:#2f92d2;overflow:hidden">
 <div class="a" style="left:10px;top:64px;width:48px;height:40px;border-radius:20px 20px 0 0;background:#f4f4f4"></div>
 <div class="a" style="left:18px;top:14px;width:32px;height:44px;border-radius:50%;background:#d7a889"></div>
 <div class="a" style="left:16px;top:8px;width:36px;height:18px;border-radius:50% 50% 20% 20%;background:#1c1c1c"></div>
</div>
<div class="x" style="left:72px;top:5055px;font-size:6.5px;color:#888">学历照片</div>
<div class="a" style="left:148px;top:4838px;width:1px;height:222px;background:#eee"></div>
<div class="x" style="left:150px;top:4846px;width:81px;text-align:right;font-size:7px;color:#aaa;line-height:24.2px">姓名：<br>出生日期：<br>证件号码：<br>层次：<br>学制：<br>学习形式：<br>系（所、函授站）：<br>学号：<br>离校日期：</div>
<div class="x" style="left:240px;top:4846px;font-size:7px;color:#333;line-height:24.2px"><span class="bl" style="width:27px;background:#ccc"></span><br>1978年■月■日<br><span class="bl" style="width:63px;background:#ccc"></span><br>专科<br>&nbsp;<br>业余<br>&nbsp;<br>&nbsp;<br><span class="bl" style="width:45px;background:#ccc"></span></div>
<div class="x" style="left:330px;top:4846px;width:75px;text-align:right;font-size:7px;color:#aaa;line-height:24.2px">性别：<br>民族：<br>学校名称：<br>专业：<br>学历类别：<br>分院：<br>班级：<br>入学日期：<br>学籍状态：</div>
<div class="x" style="left:414px;top:4846px;font-size:7px;color:#333;line-height:24.2px">男<br>&nbsp;<br>中央广播电视大学<br>工商管理(工商企业管理方向)<br>成人<br>&nbsp;<br>&nbsp;<br>&nbsp;<br>不在籍（毕业）</div>
<div class="a" style="left:402px;top:5033px;width:74px;height:22px;border:1.5px solid #e33"></div>
<svg class="a" style="left:520px;top:5066px" width="12" height="12"><circle cx="5" cy="5" r="3.5" fill="none" stroke="#999" stroke-width="1.5"/><path d="M7.5 7.5 L11 11" stroke="#999" stroke-width="2"/></svg>

<div class="t" style="left:71px;top:5105px;letter-spacing:2.2px">点击右上角“查看该学籍的在线验证报告”</div>

</body></html>
